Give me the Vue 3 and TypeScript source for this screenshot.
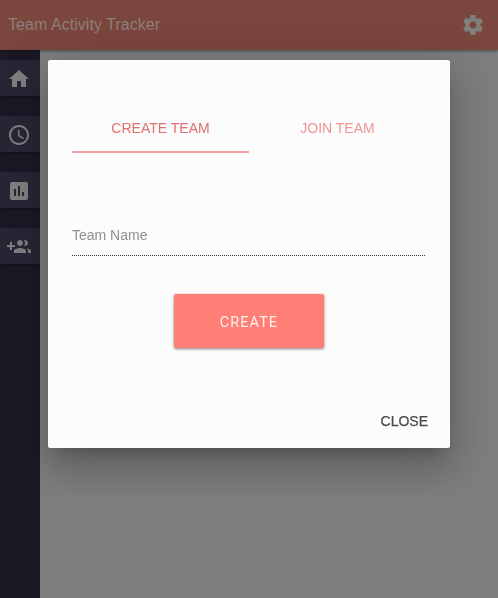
<script setup lang="ts">
import { ref } from 'vue'

interface NavItem {
  label: string
  path: string
}

const navItems: NavItem[] = [
  { label: 'Home', path: 'M10 20v-6h4v6h5v-8h3L12 3 2 12h3v8z' },
  {
    label: 'Time',
    path: 'M11.99 2C6.47 2 2 6.48 2 12s4.47 10 9.99 10C17.52 22 22 17.52 22 12S17.52 2 11.99 2zM12 20c-4.42 0-8-3.58-8-8s3.58-8 8-8 8 3.58 8 8-3.58 8-8 8zM12.5 7H11v6l5.25 3.15.75-1.23-4.5-2.67z',
  },
  {
    label: 'Reports',
    path: 'M19 3H5c-1.1 0-2 .9-2 2v14c0 1.1.9 2 2 2h14c1.1 0 2-.9 2-2V5c0-1.1-.9-2-2-2zM9 17H7v-7h2v7zm4 0h-2V7h2v10zm4 0h-2v-4h2v4z',
  },
  {
    label: 'Add team',
    path: 'M8 10H5V7H3v3H0v2h3v3h2v-3h3v-2zm10 1c1.66 0 2.99-1.34 2.99-3S19.66 5 18 5c-.32 0-.63.05-.91.14.57.81.9 1.79.9 2.86s-.34 2.04-.9 2.86c.28.09.59.14.91.14zm-5 0c1.66 0 2.99-1.34 2.99-3S14.66 5 13 5c-1.66 0-3 1.34-3 3s1.34 3 3 3zm6.62 2.16c.83.73 1.38 1.66 1.38 2.84v2h3v-2c0-1.54-2.37-2.49-4.38-2.84zM13 13c-2 0-6 1-6 3v2h12v-2c0-2-4-3-6-3z',
  },
]

const tabs = ['Create Team', 'Join Team']
const activeTab = ref(0)
const teamName = ref('')
const open = ref(true)
</script>

<template>
  <div class="app">
    <header class="topbar">
      <span class="title">Team Activity Tracker</span>
      <svg class="gear" viewBox="0 0 24 24">
        <path
          d="M19.43 12.98c.04-.32.07-.64.07-.98s-.03-.66-.07-.98l2.11-1.65c.19-.15.24-.42.12-.64l-2-3.46c-.12-.22-.39-.3-.61-.22l-2.49 1c-.52-.4-1.08-.73-1.69-.98l-.38-2.65C14.46 2.18 14.25 2 14 2h-4c-.25 0-.46.18-.49.42l-.38 2.65c-.61.25-1.17.59-1.69.98l-2.49-1c-.23-.09-.49 0-.61.22l-2 3.46c-.13.22-.07.49.12.64l2.11 1.65c-.04.32-.07.65-.07.98s.03.66.07.98l-2.11 1.65c-.19.15-.24.42-.12.64l2 3.46c.12.22.39.3.61.22l2.49-1c.52.4 1.08.73 1.69.98l.38 2.65c.03.24.24.42.49.42h4c.25 0 .46-.18.49-.42l.38-2.65c.61-.25 1.17-.59 1.69-.98l2.49 1c.23.09.49 0 .61-.22l2-3.46c.12-.22.07-.49-.12-.64l-2.11-1.65zM12 15.5c-1.93 0-3.5-1.57-3.5-3.5s1.57-3.5 3.5-3.5 3.5 1.57 3.5 3.5-1.57 3.5-3.5 3.5z"
        />
      </svg>
    </header>
    <div class="body">
      <nav class="sidebar">
        <button v-for="item in navItems" :key="item.label" class="nav-item" :aria-label="item.label">
          <svg viewBox="0 0 24 24"><path :d="item.path" /></svg>
        </button>
      </nav>
      <main class="content"></main>
    </div>

    <div v-if="open" class="overlay">
      <section class="dialog" role="dialog">
        <div class="tabs">
          <button
            v-for="(tab, i) in tabs"
            :key="tab"
            class="tab"
            :class="{ active: activeTab === i }"
            @click="activeTab = i"
          >
            {{ tab }}
          </button>
        </div>
        <input v-model="teamName" class="field" placeholder="Team Name" />
        <button class="create">CREATE</button>
        <button class="close" @click="open = false">CLOSE</button>
      </section>
    </div>
  </div>
</template>

<style>
body {
  background: #7c7f7d;
}
</style>

<style scoped>
.app {
  display: flex;
  flex-direction: column;
  height: 100vh;
  overflow: hidden;
  font-family: 'Liberation Sans', Arial, sans-serif;
}
button {
  border: 0;
  padding: 0;
  background: none;
  font-family: inherit;
}
.topbar {
  z-index: 1;
  box-sizing: border-box;
  flex: none;
  display: flex;
  align-items: center;
  justify-content: space-between;
  height: 50px;
  padding: 0 13px 0 8px;
  background: #7b463d;
  box-shadow: 0 1px 3px rgba(0, 0, 0, 0.4);
}
.title {
  font-size: 16px;
  letter-spacing: 0.05px;
  color: #8d7f79;
}
.gear {
  width: 24px;
  height: 24px;
  fill: #7e807c;
}
.body {
  flex: 1;
  display: flex;
}
.sidebar {
  box-sizing: border-box;
  display: flex;
  flex-direction: column;
  gap: 20px;
  width: 40px;
  padding-top: 10px;
  background: #1a1926;
}
.nav-item {
  display: flex;
  align-items: center;
  justify-content: center;
  height: 36px;
  padding: 1px 2px 0 0;
  box-sizing: border-box;
  background: #262635;
  box-shadow: 0 1px 3px rgba(0, 0, 0, 0.4);
}
.nav-item svg {
  width: 24px;
  height: 24px;
  fill: #7e807f;
}
.content {
  flex: 1;
  background: #7c7f7d;
}
.overlay {
  position: fixed;
  inset: 0;
  z-index: 2;
  display: flex;
  align-items: flex-start;
  padding: 60px 48px;
}
.dialog {
  box-sizing: border-box;
  flex: none;
  display: flex;
  flex-direction: column;
  width: 402px;
  height: 388px;
  padding: 44px 24px 0;
  border-radius: 2px;
  background: #fcfcfc;
  box-shadow:
    0 11px 15px -7px rgba(0, 0, 0, 0.2),
    0 24px 38px 3px rgba(0, 0, 0, 0.12),
    0 9px 46px 8px rgba(0, 0, 0, 0.14);
}
.tabs {
  display: grid;
  grid-template-columns: 1fr 1fr;
  height: 49px;
}
.tab {
  box-sizing: border-box;
  border-bottom: 2px solid transparent;
  font-size: 14px;
  text-transform: uppercase;
  color: #ef9697;
}
.tab.active {
  border-bottom-color: #f4a0a0;
  color: #df6f70;
}
.field {
  box-sizing: border-box;
  width: 353px;
  height: 40px;
  margin-top: 63px;
  padding: 0 0 2px;
  border: 0;
  border-bottom: 1px dotted #333;
  outline: 0;
  background: transparent;
  font: 14px 'Liberation Sans', Arial, sans-serif;
}
.field::placeholder {
  color: #919191;
  opacity: 1;
}
.create {
  align-self: center;
  box-sizing: border-box;
  width: 150px;
  height: 54px;
  margin-top: 38px;
  padding-top: 2px;
  border-radius: 2px;
  background: #ff7f76;
  box-shadow: 0 1px 3px rgba(0, 0, 0, 0.5);
  font-family: Roboto, sans-serif;
  font-size: 14.5px;
  letter-spacing: 1.05px;
  color: #fff0ee;
}
.close {
  align-self: flex-end;
  height: 36px;
  margin: 55px -2px 0 0;
  font-size: 14px;
  color: #4b4b4b;
  -webkit-text-stroke: 0.25px #4b4b4b;
}
</style>
